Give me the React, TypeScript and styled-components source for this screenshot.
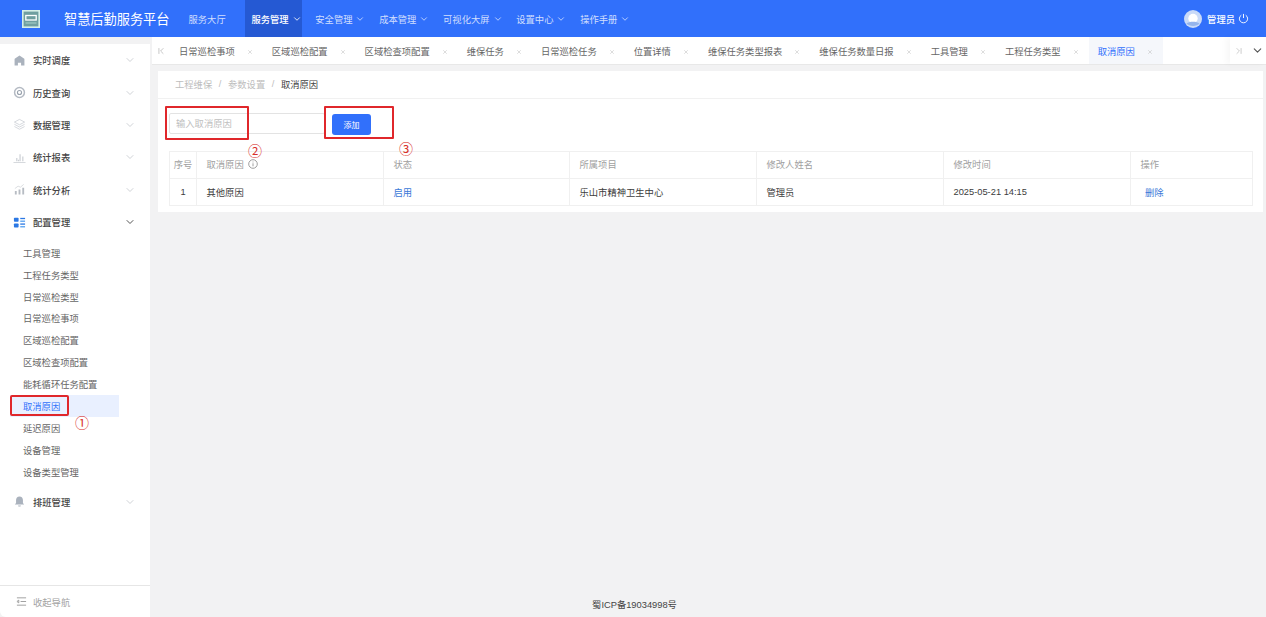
import React from 'react';
import styled, { createGlobalStyle } from 'styled-components';
import { ChevronDown, ChevronFirst, ChevronLast, X } from 'lucide-react';

const GlobalStyle = createGlobalStyle`
  html, body {
    margin: 0;
    padding: 0;
    height: 100%;
    overflow: hidden;
    background: #f2f2f3;
  }
  * {
    box-sizing: border-box;
  }
  body {
    font-family: "Liberation Sans", "Noto Sans CJK SC", sans-serif;
    font-size: 9.3px;
    color: #333;
  }
`;

const Page = styled.div`
  display: flex;
  flex-direction: column;
  height: 100vh;
`;

const TopBar = styled.header`
  flex: none;
  height: 37px;
  padding-left: 22px;
  padding-right: 17px;
  display: flex;
  align-items: center;
  background: #3170fb;
  color: #fff;
`;

const Logo = styled.svg`
  width: 18px;
  height: 18px;
  flex: none;
`;

const Title = styled.h1`
  margin: 0 13px 0 24px;
  font-size: 13.2px;
  font-weight: 400;
  white-space: nowrap;
`;

const Nav = styled.nav`
  height: 100%;
  display: flex;
  align-items: stretch;
  gap: 7.7px;
`;

const NavItem = styled.a<{ $active?: boolean; $plain?: boolean }>`
  display: flex;
  align-items: center;
  gap: 3px;
  padding-left: 6px;
  margin-right: ${(p) => (p.$plain ? '12px' : '0')};
  background: ${(p) => (p.$active ? '#2559d3' : 'transparent')};
  color: ${(p) => (p.$active ? '#fff' : 'rgba(255,255,255,.78)')};
  font-weight: ${(p) => (p.$active ? 500 : 400)};
  white-space: nowrap;

  svg {
    width: 10px;
    height: 10px;
  }
`;

const UserBox = styled.div`
  margin-left: auto;
  display: flex;
  align-items: center;
  gap: 5px;
  font-weight: 500;
`;

const Avatar = styled.svg`
  width: 18px;
  height: 18px;
`;

const PowerIcon = styled.svg`
  width: 11px;
  height: 11px;
  margin-left: -2px;
`;

const Body = styled.div`
  flex: 1;
  min-height: 0;
  display: flex;
`;

const Sidebar = styled.aside`
  flex: none;
  width: 150px;
  margin: 7px 2px 0 0;
  display: flex;
  flex-direction: column;
  background: #fff;
  border-bottom-left-radius: 6px;
`;

const MenuList = styled.div`
  flex: 1;
`;

const MenuRow = styled.div<{ $open?: boolean }>`
  height: 32.4px;
  padding: 0 14px 0 13px;
  display: flex;
  align-items: center;
  font-weight: 500;
  color: #444;

  > span {
    flex: 1;
    margin-left: 7px;
  }

  > svg:last-child {
    width: 12px;
    height: 12px;
    color: ${(p) => (p.$open ? '#555' : '#d0d3d7')};
  }
`;

const MenuIcon = styled.svg`
  width: 13px;
  height: 13px;
  flex: none;
`;

const SubList = styled.div`
  padding: 3.5px 0 3px;
`;

const SubItem = styled.div<{ $active?: boolean }>`
  position: relative;
  height: 21.9px;
  width: 109px;
  margin-left: 10px;
  padding-left: 13px;
  display: flex;
  align-items: center;
  color: ${(p) => (p.$active ? '#3170fb' : '#666')};
  background: ${(p) => (p.$active ? '#e9f0ff' : 'transparent')};
  white-space: nowrap;
`;

const MenuMark = styled.i`
  position: absolute;
  left: 0;
  top: 0;
  width: 59px;
  height: 21px;
  border: 2px solid #e0272b;
  border-radius: 2px;
`;

const Callout = styled.b`
  position: absolute;
  width: 14px;
  font-family: "Noto Sans CJK SC", sans-serif;
  font-size: 14px;
  font-weight: 400;
  line-height: 14px;
  color: #d8302c;
`;

const MenuCallout = styled(Callout)`
  left: 65px;
  top: 20px;
`;

const Collapse = styled.div`
  flex: none;
  height: 32px;
  padding-left: 16px;
  display: flex;
  align-items: center;
  gap: 6px;
  border-top: 1px solid #e6e6e6;
  color: #a3a3a3;
`;

const CollapseIcon = styled.svg`
  width: 11px;
  height: 11px;
`;

const Main = styled.main`
  flex: 1;
  min-width: 0;
  display: flex;
  flex-direction: column;
`;

const TabBar = styled.div`
  flex: none;
  height: 28px;
  display: flex;
  align-items: stretch;
  background: #fff;
  border-bottom: 1px solid #e8e8e8;
`;

const TabArrow = styled.span`
  width: 18px;
  padding-left: 4px;
  display: flex;
  align-items: center;
  color: #bbb;

  svg {
    width: 10px;
    height: 10px;
  }
`;

const Tab = styled.div<{ $active?: boolean }>`
  display: flex;
  align-items: center;
  padding: 0 10px 0 9px;
  background: ${(p) => (p.$active ? '#f5f7fb' : 'transparent')};
  color: ${(p) => (p.$active ? '#3170fb' : '#666')};
  white-space: nowrap;

  svg {
    width: 6px;
    height: 6px;
    margin: 2px 0 0 12px;
    color: #bbb;
  }
`;

const TabEnd = styled.div`
  margin-left: auto;
  width: 36px;
  padding-right: 2px;
  display: flex;
  align-items: center;
  justify-content: flex-end;
  gap: 7px;
  box-shadow: -4px 0 6px rgba(0, 0, 0, 0.03);
`;

const TabEndArrow = styled(ChevronLast)`
  width: 10px;
  height: 10px;
  color: #c4c4c4;
`;

const TabEndMenu = styled(ChevronDown)`
  width: 13px;
  height: 13px;
  color: #555;
`;

const Content = styled.div`
  flex: 1;
  min-height: 0;
  display: flex;
  flex-direction: column;
  padding: 6px 3px 0 6px;
`;

const Card = styled.section`
  background: #fff;
  padding-bottom: 6px;
`;

const Breadcrumb = styled.div`
  height: 28px;
  padding: 0 0 1px 17px;
  display: flex;
  align-items: center;
  gap: 6.6px;
  border-bottom: 1px solid #f1f1f1;
  color: #bdbdbd;
`;

const Crumb = styled.span<{ $current?: boolean }>`
  color: ${(p) => (p.$current ? '#444' : '#bdbdbd')};
`;

const Toolbar = styled.div`
  height: 52px;
  padding: 14px 0 0 11px;
  display: flex;
  align-items: flex-start;
  gap: 7px;
`;

const InputWrap = styled.div`
  position: relative;
  width: 156px;
  height: 21px;
`;

const ReasonInput = styled.input`
  width: 100%;
  height: 100%;
  padding: 0 6px;
  border: 1px solid #e3e3e3;
  border-radius: 2px;
  outline: none;
  font: inherit;

  &::placeholder {
    color: #c0c0c0;
  }
`;

const InputMark = styled.i`
  position: absolute;
  left: -4px;
  top: -7px;
  width: 84px;
  height: 34px;
  border: 2px solid #e0272b;
  border-radius: 1px;
`;

const InputCallout = styled(Callout)`
  left: 79px;
  top: 30px;
`;

const ButtonWrap = styled.div`
  position: relative;
  margin-top: 1px;
`;

const AddButton = styled.button`
  display: block;
  width: 39px;
  height: 21px;
  padding: 0 0 1px;
  border: 0;
  border-radius: 3px;
  background: #3170fb;
  color: #fff;
  font: inherit;
  font-size: 8px;
`;

const ButtonMark = styled.i`
  position: absolute;
  left: -8px;
  top: -8px;
  width: 70px;
  height: 33px;
  border: 2px solid #e0272b;
  border-radius: 1px;
`;

const ButtonCallout = styled(Callout)`
  left: 67px;
  top: 27px;
`;

const TableWrap = styled.div`
  padding: 0 10px 0 11px;
`;

const DataTable = styled.table`
  width: 1083px;
  table-layout: fixed;
  border-collapse: collapse;
`;

const Col = styled.col<{ $w: number }>`
  width: ${(p) => p.$w}px;
`;

const Th = styled.th<{ $center?: boolean }>`
  height: 27px;
  padding: 0 ${(p) => (p.$center ? '0' : '9.5px')} 1.5px;
  border: 1px solid #f0f0f0;
  font-weight: 400;
  color: #a0a0a0;
  text-align: ${(p) => (p.$center ? 'center' : 'left')};
`;

const Td = styled.td<{ $center?: boolean; $link?: boolean; $indent?: number }>`
  height: 27px;
  padding: 0 0 0 ${(p) => (p.$center ? 0 : p.$indent ?? 9.5)}px;
  border: 1px solid #f0f0f0;
  color: ${(p) => (p.$link ? '#3a78d8' : '#3c3c3c')};
  text-align: ${(p) => (p.$center ? 'center' : 'left')};
`;

const InfoIcon = styled.svg`
  width: 10px;
  height: 10px;
  margin-left: 4px;
  vertical-align: -1px;
`;

const Footer = styled.footer`
  margin-top: auto;
  height: 26px;
  padding-right: 152px;
  display: flex;
  align-items: center;
  justify-content: center;
  color: #444;
`;

const tabs = [
  '日常巡检事项',
  '区域巡检配置',
  '区域检查项配置',
  '维保任务',
  '日常巡检任务',
  '位置详情',
  '维保任务类型报表',
  '维保任务数量日报',
  '工具管理',
  '工程任务类型',
  '取消原因',
];

const subMenus = [
  '工具管理',
  '工程任务类型',
  '日常巡检类型',
  '日常巡检事项',
  '区域巡检配置',
  '区域检查项配置',
  '能耗循环任务配置',
  '取消原因',
  '延迟原因',
  '设备管理',
  '设备类型管理',
];

const navItems = ['服务管理', '安全管理', '成本管理', '可视化大屏', '设置中心', '操作手册'];

const HomeGlyph = () => (
  <MenuIcon viewBox="0 0 14 14">
    <path d="M7 1.500 2.200 4.800c-.3.200-.5.500-.5.900v6.800h3.600V9.300h3.400v3.200h3.600V5.700c0-.4-.2-.7-.5-.9z" fill="#aab2bd" />
  </MenuIcon>
);

const HistoryGlyph = () => (
  <MenuIcon viewBox="0 0 14 14" fill="none">
    <circle cx="7" cy="7" r="5.300" stroke="#b4bac3" strokeWidth="1.600" />
    <circle cx="7" cy="7" r="2.200" stroke="#9aa3ae" strokeWidth="1.200" />
  </MenuIcon>
);

const LayersGlyph = () => (
  <MenuIcon viewBox="0 0 14 14" fill="none" stroke="#c8ccd2" strokeWidth=".8">
    <path d="M7 1.500 1.500 4.400 7 7.300l5.500-2.900z" />
    <path d="M1.500 6.800 7 9.700l5.500-2.900" />
    <path d="M1.500 9.200 7 12.100l5.500-2.900" />
  </MenuIcon>
);

const ReportGlyph = () => (
  <MenuIcon viewBox="0 0 14 14">
    <path d="M.5 12h13v.8H.5z" fill="#c8ccd2" />
    <path d="M3.500 7.500h1.200V11H3.500zM7 3.500h1.200V11H7zM10 6h1.200v5H10zM5.300 9.500h1.100V11H5.300z" fill="#c8ccd2" />
  </MenuIcon>
);

const AnalysisGlyph = () => (
  <MenuIcon viewBox="0 0 14 14">
    <path d="M2 8.500h2v4H2zM6 7h2v5.500H6zM10 5h2v7.500h-2z" fill="#b7bcc3" />
    <path d="m2 6 3.500-2.600L8 4.500l3.500-3" fill="none" stroke="#cfd2d7" strokeWidth=".8" />
  </MenuIcon>
);

const ConfigGlyph = () => (
  <MenuIcon viewBox="0 0 14 14">
    <rect x="1" y="2" width="5" height="4.300" rx=".8" fill="#2b78e4" />
    <rect x="1" y="8" width="5" height="4.300" rx=".8" fill="#2b78e4" />
    <rect x="7.800" y="2" width="5.200" height="1.400" fill="#2b78e4" />
    <rect x="7.800" y="4.900" width="5.200" height="1.400" fill="#56a0f0" />
    <rect x="7.800" y="8" width="5.200" height="1.400" fill="#2b78e4" />
    <rect x="7.800" y="10.900" width="5.200" height="1.400" fill="#56a0f0" />
  </MenuIcon>
);

const BellGlyph = () => (
  <MenuIcon viewBox="0 0 14 14">
    <path d="M7 1.500c-2.400 0-3.700 1.800-3.700 4v3L2 10.200h10L10.700 8.500v-3c0-2.200-1.300-4-3.700-4z" fill="#aab2bd" />
    <path d="M5.500 11.200h3c0 .8-.7 1.300-1.500 1.300s-1.500-.5-1.500-1.300z" fill="#aab2bd" />
  </MenuIcon>
);

const menusBefore = [
  { name: '实时调度', icon: <HomeGlyph /> },
  { name: '历史查询', icon: <HistoryGlyph /> },
  { name: '数据管理', icon: <LayersGlyph /> },
  { name: '统计报表', icon: <ReportGlyph /> },
  { name: '统计分析', icon: <AnalysisGlyph /> },
];

export default function App() {
  return (
    <Page>
      <GlobalStyle />
      <TopBar>
        <Logo viewBox="0 0 18 18" fill="none">
          <rect x=".8" y=".8" width="16.400" height="16.400" fill="#6f9fa0" stroke="#d5efe8" strokeWidth="1.600" />
          <rect x="3.800" y="5.500" width="10.400" height="4.500" stroke="#fff" strokeWidth="1.300" />
          <path d="M3.500 13h11" stroke="#a9d4cc" strokeWidth="1" />
        </Logo>
        <Title>智慧后勤服务平台</Title>
        <Nav>
          <NavItem $plain>服务大厅</NavItem>
          {navItems.map((name) => (
            <NavItem key={name} $active={name === '服务管理'}>
              {name}
              <ChevronDown />
            </NavItem>
          ))}
        </Nav>
        <UserBox>
          <Avatar viewBox="0 0 18 18">
            <circle cx="9" cy="9" r="9" fill="#c9daf8" />
            <circle cx="9" cy="8.500" r="4.700" fill="#fff" />
            <path d="M2.500 13.500c2.500-2.500 10.500-2.500 13 0-2.500 3.300-10.500 3.300-13 0z" fill="#94b4ec" />
          </Avatar>
          管理员
          <PowerIcon viewBox="0 0 12 12" fill="none" stroke="#fff" strokeWidth="1">
            <path d="M3.600 2.400a4.500 4.500 0 1 0 4.800 0" />
            <path d="M6 1v4.500" />
          </PowerIcon>
        </UserBox>
      </TopBar>
      <Body>
        <Sidebar>
          <MenuList>
            {menusBefore.map((menu) => (
              <MenuRow key={menu.name}>
                {menu.icon}
                <span>{menu.name}</span>
                <ChevronDown />
              </MenuRow>
            ))}
            <MenuRow $open>
              <ConfigGlyph />
              <span>配置管理</span>
              <ChevronDown />
            </MenuRow>
            <SubList>
              {subMenus.map((name) => (
                <SubItem key={name} $active={name === '取消原因'}>
                  {name}
                  {name === '取消原因' && (
                    <>
                      <MenuMark />
                      <MenuCallout>①</MenuCallout>
                    </>
                  )}
                </SubItem>
              ))}
            </SubList>
            <MenuRow>
              <BellGlyph />
              <span>排班管理</span>
              <ChevronDown />
            </MenuRow>
          </MenuList>
          <Collapse>
            <CollapseIcon viewBox="0 0 12 12" fill="none" stroke="#999" strokeWidth="1">
              <path d="M1 2h10M5 6h6M1 10h10M1 6l2-1.500v3z" />
            </CollapseIcon>
            收起导航
          </Collapse>
        </Sidebar>
        <Main>
          <TabBar>
            <TabArrow>
              <ChevronFirst />
            </TabArrow>
            {tabs.map((name) => (
              <Tab key={name} $active={name === '取消原因'}>
                {name}
                <X />
              </Tab>
            ))}
            <TabEnd>
              <TabEndArrow />
              <TabEndMenu />
            </TabEnd>
          </TabBar>
          <Content>
            <Card>
              <Breadcrumb>
                <Crumb>工程维保</Crumb>/<Crumb>参数设置</Crumb>/<Crumb $current>取消原因</Crumb>
              </Breadcrumb>
              <Toolbar>
                <InputWrap>
                  <ReasonInput placeholder="输入取消原因" />
                  <InputMark />
                  <InputCallout>②</InputCallout>
                </InputWrap>
                <ButtonWrap>
                  <AddButton>添加</AddButton>
                  <ButtonMark />
                  <ButtonCallout>③</ButtonCallout>
                </ButtonWrap>
              </Toolbar>
              <TableWrap>
                <DataTable>
                  <colgroup>
                    <Col $w={27} />
                    <Col $w={187} />
                    <Col $w={186} />
                    <Col $w={187} />
                    <Col $w={187} />
                    <Col $w={187} />
                    <Col $w={122} />
                  </colgroup>
                  <thead>
                    <tr>
                      <Th $center>序号</Th>
                      <Th>
                        取消原因
                        <InfoIcon viewBox="0 0 10 10" fill="none" stroke="#888" strokeWidth=".8">
                          <circle cx="5" cy="5" r="4.300" />
                          <path d="M5 4.300v3M5 2.600v.8" />
                        </InfoIcon>
                      </Th>
                      <Th>状态</Th>
                      <Th>所属项目</Th>
                      <Th>修改人姓名</Th>
                      <Th>修改时间</Th>
                      <Th>操作</Th>
                    </tr>
                  </thead>
                  <tbody>
                    <tr>
                      <Td $center>1</Td>
                      <Td>其他原因</Td>
                      <Td $link>启用</Td>
                      <Td>乐山市精神卫生中心</Td>
                      <Td>管理员</Td>
                      <Td>2025-05-21 14:15</Td>
                      <Td $link $indent={14}>
                        删除
                      </Td>
                    </tr>
                  </tbody>
                </DataTable>
              </TableWrap>
            </Card>
            <Footer>蜀ICP备19034998号</Footer>
          </Content>
        </Main>
      </Body>
    </Page>
  );
}
